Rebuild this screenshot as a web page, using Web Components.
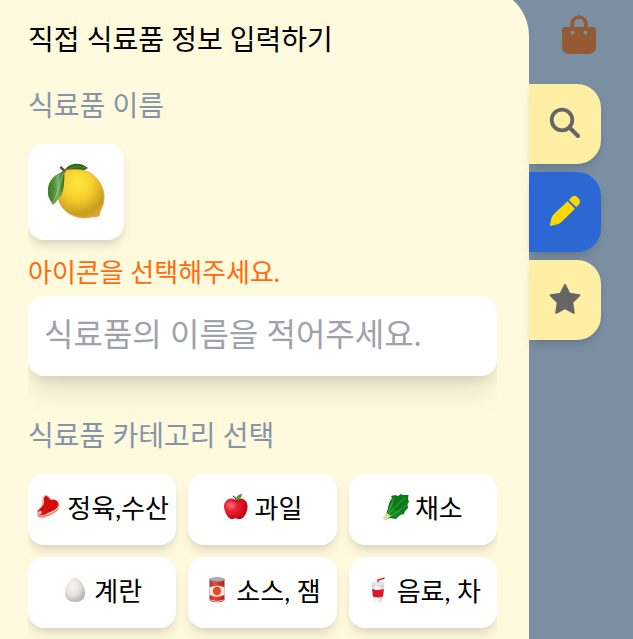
<!DOCTYPE html>
<html lang="ko">
<head>
<meta charset="utf-8">
<meta name="viewport" content="width=device-width, initial-scale=1">
<title>직접 식료품 정보 입력하기</title>
<style>
body { margin: 0; background: #7b8fa3; color: #000; font-family: Lato, "Noto Sans CJK KR", sans-serif; }
</style>
</head>
<body>
<grocery-page></grocery-page>
<script>
// Food pictograms
const FOODS = {
  lemon: `<defs>
    <radialGradient id="l" cx=".42" cy=".28" r=".8"><stop offset="0" stop-color="#ffe63f"/><stop offset=".4" stop-color="#f9d02d"/><stop offset=".8" stop-color="#c99e1e"/><stop offset="1" stop-color="#dfa43d"/></radialGradient>
    <linearGradient id="lf" x1="0" x2="1"><stop offset="0" stop-color="#3d7a27"/><stop offset=".45" stop-color="#549a3a"/><stop offset=".6" stop-color="#7eb668"/><stop offset="1" stop-color="#2e681c"/></linearGradient></defs>
    <path d="M18 9C23 0 35 0 42 6C37 10 28 10 18 9Z" fill="#2f6a1b"/>
    <path d="M21 8C27 4 34 4 40 6" stroke="#4d8a2d" fill="none"/>
    <path d="M18 8.500C28 7 38 6.500 46 12C54 18 59 28 58 37C57.500 45 54 48 53.500 53C52 56 48 54 43 55.500C28 58 13 48 12 34C11 23 14 13 18 8.500Z" fill="url(#l)" stroke="#dca342" stroke-width=".7"/>
    <path d="M19 9C17 21 19 32 14 35C18 24 15 15 19 9Z" fill="#92740e" opacity=".5"/>
    <path d="M18 9C7 13 1 20 2 31C2 36 5 39 7 43C12 38 20 32 18 9Z" fill="url(#lf)"/>
    <path d="M17.500 11C14 20 12 30 7 41" stroke="#a9cf98" stroke-width=".7" fill="none"/>
    <path d="M15 5.500L18.500 9" stroke="#66534c" stroke-width="2.500" stroke-linecap="round"/>`,
  meat: `<path d="M2 20C1 15 4 15 6 12C8 8 6 3 10 1C14 0 14 5 17 5C20 5 24 6 24.500 12C24 18 17 21 12 23C8 25 2 25 2 20Z" fill="#f0b5a4"/>
    <path d="M3 17C5 14 8 13 9 9C9 6 8 3 11 2C14 2 14 6 17 6C21 5 23.500 8 23.500 11C23 16 16 18 11 20C7 22 3 21 3 17Z" fill="#d90f10"/>
    <path d="M10 4C13 9 11 14 5 16M15 7L12 15M19 7C22 9 18 14 13 17" stroke="#b3060a" stroke-width=".8" fill="none"/>
    <path d="M3 19C5 15 8 18 6 20Z" fill="#ffe0d7"/><path d="M3 21.500C9 24.500 18 19 23.500 15" stroke="#c86a58" stroke-width=".8" fill="none"/>
    <path d="M12 20C17 18 22 16 24 12" stroke="#ffe3d8" fill="none"/>`,
  apple: `<defs><radialGradient id="a" cx=".3" cy=".35" r=".75"><stop offset="0" stop-color="#ff7777"/><stop offset=".35" stop-color="#f02034"/><stop offset="1" stop-color="#b90016"/></radialGradient></defs>
    <path d="M13 6C7 2 1 6 1 13C2 20 6 26 10 25C12 24 13 24 15 25C20 26 24 20 24.500 13C25 6 18 2 13 6Z" fill="url(#a)"/>
    <path d="M9 6C11 8 15 8 18 6" stroke="#a01523" stroke-width=".8" fill="none"/><path d="M13.500 7C13 4 12 3 10 2" stroke="#67411d" stroke-width="1.200" fill="none"/>
    <path d="M13 6C13 2 16 0 19 0C18.500 4 16 6 13 6Z" fill="#47a52d"/>`,
  greens: `<path d="M2 24L5 14C6 9 7 7 9 4L8 2L12 1L15 2L18 0L20 1L25.500 1L25 5L26 8L24.500 10L25 14L22 17L21 20L17 21L13 25L7 24L2 26Z" fill="#087a16"/>
    <path d="M4 21L6 13L10 7L10 15L19 18L13 23L7 23Z" fill="#158a20"/>
    <path d="M5 21C10 15 16 9 22 4M4 20C7 15 9 9 11 4M7 22C13 19 19 15 23 11" stroke="#69b04c" stroke-width=".7" fill="none"/>
    <path d="M0 24L4 19L8 22L4 25.500Q1 27 0 24Z" fill="#d3df9d"/>`,
  egg: `<defs><radialGradient id="e" cx=".38" cy=".35" r=".7"><stop offset="0" stop-color="#f8f6f3"/><stop offset=".5" stop-color="#e8e5e0"/><stop offset="1" stop-color="#b8b2ab"/></radialGradient></defs>
    <path d="M13 1C8 1 3 9 3 16C3 22 7 25 13 25C19 25 23 22 23 16C23 9 18 1 13 1Z" fill="url(#e)"/>`,
  can: `<defs><linearGradient id="c"><stop offset="0" stop-color="#b9251e"/><stop offset=".3" stop-color="#ed493b"/><stop offset="1" stop-color="#b3221b"/></linearGradient></defs>
    <path d="M5.500 2V23C6 26 20 26 20.500 23V2Z" fill="url(#c)"/><path d="M5.500 10Q13 8 20.500 10V18Q13 21 5.500 18Z" fill="#e9e5e2"/>
    <circle cx="13" cy="14" r="5.500" fill="#f8e8df"/><circle cx="13" cy="14" r="4.200" fill="#f0481d"/><path d="M11 11L13 12L15 11" stroke="#577c29" stroke-width=".7" fill="none"/>
    <ellipse cx="13" cy="2.500" rx="7.500" ry="1.900" fill="#a9b0b5" stroke="#848c91" stroke-width=".6"/><path d="M6 23Q13 26 20 23" stroke="#d5c4be" fill="none"/>`,
  drink: `<defs><linearGradient id="d"><stop offset="0" stop-color="#c5cacf"/><stop offset=".35" stop-color="#fff"/><stop offset="1" stop-color="#c3c9ce"/></linearGradient></defs>
    <path d="M13 7V3L19.500 1" stroke="#d92637" stroke-width="1.500" fill="none"/><path d="M7 7L9 24Q13 27 17 24L19 7Z" fill="url(#d)"/>
    <ellipse cx="13" cy="7" rx="6.500" ry="1.800" fill="#e6e9ec" stroke="#c1c6ca" stroke-width=".6"/>
    <path d="M7 12Q13 14 19 12L18 19.500Q13 21.500 8 19.500Z" fill="#e1152b"/>`
};

// Interface glyphs on a 40-unit grid
const GLYPHS = {
  bag: `<path fill-rule="evenodd" fill="currentColor" d="M6 12H34Q37 12 37 15V31Q37 39 29 39H11Q3 39 3 31V15Q3 12 6 12ZM13.3 15.5A2 2 0 1 0 13.3 19.5A2 2 0 1 0 13.3 15.5ZM26.5 15.5A2 2 0 1 0 26.5 19.5A2 2 0 1 0 26.5 15.5Z"/><path d="M13.2 13V8.8A6.8 6.8 0 0 1 26.8 8.8V13" fill="none" stroke="currentColor" stroke-width="3.7"/>`,
  search: `<g fill="none" stroke="currentColor"><circle cx="17" cy="16" r="10.3" stroke-width="3.8"/><path d="M24.5 23.5L33 32" stroke-width="4" stroke-linecap="round"/></g>`,
  pencil: `<path fill="currentColor" d="M22.6 9.2L30 16.7L17.5 29C15 31.5 13 32.3 10.5 32.7L6 33.8Q4.7 34 5 32.8L6 28C6.6 25 7.5 23.3 10 21ZM23.9 8L26.7 5Q29.5 2.500 32.2 5L33.8 6.7Q36.2 9.3 34 12.2L31.3 15.3Z"/>`,
  star: `<path fill="currentColor" stroke="currentColor" stroke-width="2" stroke-linejoin="round" d="M20 5L24.4 13.8L34.4 15.2L27.2 22.4L28.8 32.8L20 28.2L11.2 32.8L12.8 22.4L5.6 15.2L15.6 13.8Z"/>`
};

function define(name, render) {
  customElements.define(name, class extends HTMLElement {
    connectedCallback() {
      if (this.shadowRoot) return;
      const template = document.createElement('template');
      template.innerHTML = render(this);
      this.attachShadow({ mode: 'open' }).append(template.content.cloneNode(true));
    }
  });
}

define('food-icon', el => `
  <style>
    :host { display: block; flex: none; width: 26px; height: 26px; }
    :host([name="lemon"]) { width: 60px; height: 60px; }
    svg { display: block; width: 100%; height: 100%; }
  </style>
  <svg viewBox="0 0 ${el.getAttribute('name') === 'lemon' ? '60 60' : '26 26'}" aria-hidden="true">${FOODS[el.getAttribute('name')]}</svg>`);

define('ui-icon', el => `
  <style>:host { display: block; width: 40px; height: 40px; } svg { display: block; width: 100%; height: 100%; }</style>
  <svg viewBox="0 0 40 40" aria-hidden="true">${GLYPHS[el.getAttribute('name')]}</svg>`);

define('category-button', el => `
  <style>
    :host { display: block; min-width: 0; }
    button { display: flex; align-items: center; justify-content: center; gap: 6px; width: 100%; padding: 15px 0 17px; border: 0; border-radius: 16px; background: #fff; color: #000; font: inherit; font-size: 26px; line-height: 39px; white-space: nowrap; box-shadow: 0 8px 12px -2px rgb(0 0 0 / .1), 0 4px 8px -4px rgb(0 0 0 / .1); }
    food-icon { margin-bottom: 4px; }
  </style>
  <button type="button"><food-icon name="${el.getAttribute('icon')}"></food-icon><span><slot></slot></span></button>`);

define('side-tab', el => `
  <style>
    :host { display: block; }
    button { display: flex; align-items: center; justify-content: center; width: 100%; height: 80px; padding: 0; border: 0; border-radius: 0 24px 24px 0; background: #ffefa5; color: #666; box-shadow: 0 8px 12px -2px rgb(0 0 0 / .1), 0 4px 8px -4px rgb(0 0 0 / .1); }
    :host([active]) button { background: #2c68d4; color: #ffd700; }
  </style>
  <button type="button" aria-label="${el.getAttribute('label')}"><ui-icon name="${el.getAttribute('icon')}"></ui-icon></button>`);

define('side-rail', () => `
  <style>
    :host { display: flex; flex-direction: column; flex: none; width: 104px; }
    header { display: flex; justify-content: flex-end; height: 84px; padding: 15px 34px 0 0; box-sizing: border-box; }
    .bag { height: 40px; padding: 0; border: 0; background: none; color: #955a33; }
    nav { display: flex; flex-direction: column; gap: 8px; padding-right: 32px; }
  </style>
  <header><button class="bag" type="button" aria-label="장바구니"><ui-icon name="bag"></ui-icon></button></header>
  <nav>
    <side-tab icon="search" label="검색"></side-tab>
    <side-tab icon="pencil" label="직접 입력" active></side-tab>
    <side-tab icon="star" label="즐겨찾기"></side-tab>
  </nav>`);

define('grocery-form', () => `
  <style>
    :host { display: block; flex: 1; min-width: 0; box-sizing: border-box; margin-top: -12px; padding: 30px 32px 0 28px; border-top-right-radius: 48px; background: #fff9dd; }
    form { display: flex; flex-direction: column; overflow: hidden; padding-bottom: 12px; }
    h1, h2, p, label { margin: 0; font-weight: 400; font-size: 28px; line-height: 42px; }
    h1 { margin-bottom: 24px; }
    label, h2 { color: #8595a9; margin-bottom: 18px; }
    .icon { display: flex; align-items: center; justify-content: center; width: 96px; height: 96px; padding: 0; border: 0; border-radius: 16px; background: #fff; box-shadow: 0 8px 12px -2px rgb(0 0 0 / .1), 0 4px 8px -4px rgb(0 0 0 / .1); }
    p { padding: 12px 0 4px; color: #ff6b0b; font-size: 26px; line-height: 40px; }
    input { width: 100%; height: 80px; box-sizing: border-box; margin-bottom: 38px; padding: 0 16px 6px; border: 0; border-radius: 16px; background: #fff; color: #000; font: inherit; font-size: 32px; box-shadow: 0 20px 30px -6px rgb(0 0 0 / .1), 0 8px 12px -4px rgb(0 0 0 / .1); }
    input::placeholder { color: #a1a1aa; opacity: 1; }
    section { display: grid; grid-template-columns: repeat(3, 1fr); gap: 12px; }
  </style>
  <form>
    <h1>직접 식료품 정보 입력하기</h1>
    <label for="name">식료품 이름</label>
    <button class="icon" type="button" aria-label="아이콘 선택"><food-icon name="lemon"></food-icon></button>
    <p>아이콘을 선택해주세요.</p>
    <input id="name" type="text" placeholder="식료품의 이름을 적어주세요.">
    <h2 id="category">식료품 카테고리 선택</h2>
    <section aria-labelledby="category">
      <category-button icon="meat">정육,수산</category-button>
      <category-button icon="apple">과일</category-button>
      <category-button icon="greens">채소</category-button>
      <category-button icon="egg">계란</category-button>
      <category-button icon="can">소스, 잼</category-button>
      <category-button icon="drink">음료, 차</category-button>
    </section>
  </form>`);

define('grocery-page', () => `
  <style>:host { display: flex; min-height: 100vh; overflow: hidden; }</style>
  <grocery-form></grocery-form><side-rail></side-rail>`);
</script>
</body>
</html>
